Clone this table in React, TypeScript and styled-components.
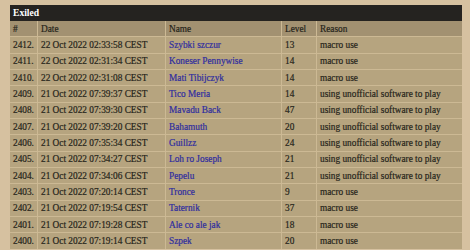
import React from "react"
import styled, { createGlobalStyle } from "styled-components"

const colors = {
  page: "#d6c1a0",
  bar: "#252320",
  head: "#a29171",
  row: "#b6a47f",
  line: "#ccb994",
  text: "#26251b",
  link: "#2f2d9f",
}

const GlobalStyle = createGlobalStyle`
  html, body {
    margin: 0;
    padding: 0;
    background: ${colors.page};
  }
  body {
    font-family: "Liberation Serif", "Times New Roman", serif;
    color: ${colors.text};
  }
`

const Panel = styled.section`
  margin: 5px 0 0 10px;
  width: 452px;
`

const Title = styled.div`
  background: ${colors.bar};
  color: #fff;
  font-weight: bold;
  font-size: 9.6px;
  height: 16px;
  line-height: 16px;
  padding: 0 3px;
`

const Table = styled.table`
  border-collapse: collapse;
  table-layout: fixed;
  width: 100%;
  font-size: 9.3px;
  -webkit-text-stroke: 0.2px currentColor;
`

interface CellProps {
  $w?: number
}

const Th = styled.th<CellProps>`
  background: ${colors.head};
  font-weight: normal;
  text-align: left;
  height: 15.33px;
  padding: 0 3px;
  border-left: 1px solid ${colors.line};
  width: ${(p): string => (p.$w ? `${p.$w}px` : "auto")};

  &:first-child {
    border-left: none;
  }
`

const Td = styled.td`
  background: ${colors.row};
  height: 15.33px;
  padding: 0 3px;
  border-top: 1px solid ${colors.line};
  border-left: 1px solid ${colors.line};
  white-space: nowrap;
  overflow: hidden;

  &:first-child {
    border-left: none;
  }
`

const NameLink = styled.a`
  color: ${colors.link};
  text-decoration: none;
`

interface Entry {
  id: number
  date: string
  name: string
  level: number
  reason: string
}

const macro = "macro use"
const unofficial = "using unofficial software to play"

const entries: Entry[] = [
  { id: 2412, date: "22 Oct 2022 02:33:58 CEST", name: "Szybki szczur", level: 13, reason: macro },
  { id: 2411, date: "22 Oct 2022 02:31:34 CEST", name: "Koneser Pennywise", level: 14, reason: macro },
  { id: 2410, date: "22 Oct 2022 02:31:08 CEST", name: "Mati Tibijczyk", level: 14, reason: macro },
  { id: 2409, date: "21 Oct 2022 07:39:37 CEST", name: "Tico Meria", level: 14, reason: unofficial },
  { id: 2408, date: "21 Oct 2022 07:39:30 CEST", name: "Mavadu Back", level: 47, reason: unofficial },
  { id: 2407, date: "21 Oct 2022 07:39:20 CEST", name: "Bahamuth", level: 20, reason: unofficial },
  { id: 2406, date: "21 Oct 2022 07:35:34 CEST", name: "Guillzz", level: 24, reason: unofficial },
  { id: 2405, date: "21 Oct 2022 07:34:27 CEST", name: "Loh ro Joseph", level: 21, reason: unofficial },
  { id: 2404, date: "21 Oct 2022 07:34:06 CEST", name: "Pepelu", level: 21, reason: unofficial },
  { id: 2403, date: "21 Oct 2022 07:20:14 CEST", name: "Tronce", level: 9, reason: macro },
  { id: 2402, date: "21 Oct 2022 07:19:54 CEST", name: "Taternik", level: 37, reason: macro },
  { id: 2401, date: "21 Oct 2022 07:19:28 CEST", name: "Ale co ale jak", level: 18, reason: macro },
  { id: 2400, date: "21 Oct 2022 07:19:14 CEST", name: "Szpek", level: 20, reason: macro },
]

const App: React.FC = () => {
  return (
    <>
      <GlobalStyle />
      <Panel>
        <Title>Exiled</Title>
        <Table>
          <thead>
            <tr>
              <Th $w={21}>#</Th>
              <Th $w={121}>Date</Th>
              <Th $w={109}>Name</Th>
              <Th $w={28}>Level</Th>
              <Th>Reason</Th>
            </tr>
          </thead>
          <tbody>
            {entries.map(e => (
              <tr key={e.id}>
                <Td>{e.id}.</Td>
                <Td>{e.date}</Td>
                <Td>
                  <NameLink href="#">{e.name}</NameLink>
                </Td>
                <Td>{e.level}</Td>
                <Td>{e.reason}</Td>
              </tr>
            ))}
          </tbody>
        </Table>
      </Panel>
    </>
  )
}

export default App
